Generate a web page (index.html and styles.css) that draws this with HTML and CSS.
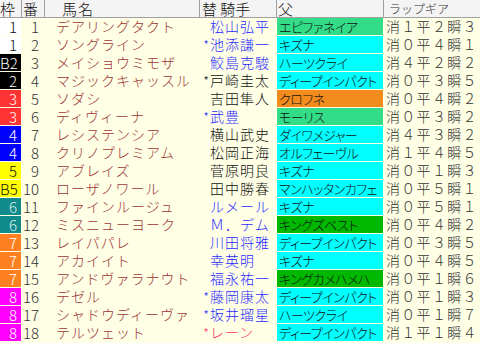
FILE: index.html
```html
<!DOCTYPE html>
<html lang="ja">
<head>
<meta charset="utf-8">
<link rel="stylesheet" href="styles.css">
</head>
<body>
<table class="tbl">
<colgroup>
<col class="c-waku"><col class="c-ban"><col class="c-name"><col class="c-kae"><col class="c-jockey"><col class="c-sire"><col class="c-gear">
</colgroup>
<thead>
<tr>
<th class="h-waku">枠</th><th class="h-ban">番</th><th class="h-name">馬名</th><th class="h-jockey" colspan="2">替 騎手</th><th class="h-sire">父</th><th class="h-gear">ラップギア</th>
</tr>
</thead>
<tbody>
<tr><td class="waku w1">1</td><td class="ban">1</td><td class="name">デアリングタクト</td><td class="kae"></td><td class="jockey blue">松山弘平</td><td class="sire s-green">エピファネイア</td><td class="gear">消１平２瞬３</td></tr>
<tr><td class="waku w1">1</td><td class="ban">2</td><td class="name">ソングライン</td><td class="kae blue">*</td><td class="jockey blue">池添謙一</td><td class="sire s-cyan">キズナ</td><td class="gear">消０平４瞬１</td></tr>
<tr><td class="waku w2">B2</td><td class="ban">3</td><td class="name">メイショウミモザ</td><td class="kae"></td><td class="jockey blue">鮫島克駿</td><td class="sire s-cyan">ハーツクライ</td><td class="gear">消４平２瞬２</td></tr>
<tr><td class="waku w2">2</td><td class="ban">4</td><td class="name">マジックキャッスル</td><td class="kae">*</td><td class="jockey">戸崎圭太</td><td class="sire s-cyan">ディープインパクト</td><td class="gear">消０平３瞬５</td></tr>
<tr><td class="waku w3">3</td><td class="ban">5</td><td class="name">ソダシ</td><td class="kae"></td><td class="jockey">吉田隼人</td><td class="sire s-orange">クロフネ</td><td class="gear">消０平４瞬２</td></tr>
<tr><td class="waku w3">3</td><td class="ban">6</td><td class="name">ディヴィーナ</td><td class="kae blue">*</td><td class="jockey blue">武豊</td><td class="sire s-green">モーリス</td><td class="gear">消０平３瞬２</td></tr>
<tr><td class="waku w4">4</td><td class="ban">7</td><td class="name">レシステンシア</td><td class="kae"></td><td class="jockey">横山武史</td><td class="sire s-cyan">ダイワメジャー</td><td class="gear">消４平３瞬２</td></tr>
<tr><td class="waku w4">4</td><td class="ban">8</td><td class="name">クリノプレミアム</td><td class="kae"></td><td class="jockey">松岡正海</td><td class="sire s-cyan">オルフェーヴル</td><td class="gear">消１平４瞬５</td></tr>
<tr><td class="waku w5">5</td><td class="ban">9</td><td class="name">アブレイズ</td><td class="kae"></td><td class="jockey">菅原明良</td><td class="sire s-cyan">キズナ</td><td class="gear">消０平１瞬３</td></tr>
<tr><td class="waku w5">B5</td><td class="ban">10</td><td class="name">ローザノワール</td><td class="kae"></td><td class="jockey">田中勝春</td><td class="sire s-cyan">マンハッタンカフェ</td><td class="gear">消０平５瞬１</td></tr>
<tr><td class="waku w6">6</td><td class="ban">11</td><td class="name">ファインルージュ</td><td class="kae"></td><td class="jockey blue">ルメール</td><td class="sire s-cyan">キズナ</td><td class="gear">消０平５瞬１</td></tr>
<tr><td class="waku w6">6</td><td class="ban">12</td><td class="name">ミスニューヨーク</td><td class="kae"></td><td class="jockey blue">Ｍ．デム</td><td class="sire s-dgreen">キングズベスト</td><td class="gear">消０平４瞬２</td></tr>
<tr><td class="waku w7">7</td><td class="ban">13</td><td class="name">レイパパレ</td><td class="kae"></td><td class="jockey blue">川田将雅</td><td class="sire s-cyan">ディープインパクト</td><td class="gear">消０平３瞬５</td></tr>
<tr><td class="waku w7">7</td><td class="ban">14</td><td class="name">アカイイト</td><td class="kae"></td><td class="jockey blue">幸英明</td><td class="sire s-cyan">キズナ</td><td class="gear">消０平４瞬５</td></tr>
<tr><td class="waku w7">7</td><td class="ban">15</td><td class="name">アンドヴァラナウト</td><td class="kae"></td><td class="jockey blue">福永祐一</td><td class="sire s-dgreen">キングカメハメハ</td><td class="gear">消０平１瞬６</td></tr>
<tr><td class="waku w8">8</td><td class="ban">16</td><td class="name">デゼル</td><td class="kae blue">*</td><td class="jockey blue">藤岡康太</td><td class="sire s-cyan">ディープインパクト</td><td class="gear">消０平１瞬３</td></tr>
<tr><td class="waku w8">8</td><td class="ban">17</td><td class="name">シャドウディーヴァ</td><td class="kae blue">*</td><td class="jockey blue">坂井瑠星</td><td class="sire s-cyan">ハーツクライ</td><td class="gear">消０平１瞬７</td></tr>
<tr><td class="waku w8">8</td><td class="ban">18</td><td class="name">テルツェット</td><td class="kae pink">*</td><td class="jockey pink">レーン</td><td class="sire s-cyan">ディープインパクト</td><td class="gear">消１平１瞬４</td></tr>
</tbody>
</table>
</body>
</html>
```

FILE: styles.css
```css
html, body {
  margin: 0;
  padding: 0;
  background: #ffffe6;
}
body {
  width: 480px;
  height: 343px;
  overflow: hidden;
  font-family: "Noto Sans CJK JP", "Noto Sans", sans-serif;
  font-weight: 300;
}
.tbl {
  width: 480px;
  table-layout: fixed;
  border-collapse: separate;
  border-spacing: 0;
}
.c-waku { width: 22px; }
.c-ban { width: 23px; }
.c-name { width: 155px; }
.c-kae { width: 10px; }
.c-jockey { width: 67px; }
.c-sire { width: 107px; }
.c-gear { width: 96px; }

th {
  height: 17px;
  padding: 0;
  background: #f4f4f4;
  border-bottom: 1px solid #a0a0a0;
  border-right: 1px solid #a0a0a0;
  font-weight: 300;
  font-size: 15px;
  line-height: 17px;
  color: #111;
  text-align: left;
  white-space: nowrap;
}
th.h-gear { border-right: none; }
.h-waku { padding-left: 0; }
.h-ban { padding-left: 1px; }
.h-name { padding-left: 17px; letter-spacing: 1px; }
.h-jockey { padding-left: 2px; }
.h-sire { padding-left: 1px; }
.h-gear { padding-left: 5px; font-size: 12px; color: #333; }

td {
  height: 17px;
  padding: 0;
  border-bottom: 1px solid #ffffe6;
  line-height: 17px;
  font-size: 14px;
  white-space: nowrap;
}
.waku {
  border-right: 1px solid #ffffe6;
  text-align: right;
  padding-right: 4px;
  font-size: 15px;
  color: #fff;
}
.w1 { background: #ffffff; color: #111; }
.w2 { background: #000000; }
.w3 { background: #ff3333; }
.w4 { background: #0000ff; }
.w5 { background: #ffff00; color: #111; }
.w6 { background: #108a8a; color: #d8eeee; }
.w7 { background: #ff8020; }
.w8 { background: #ff00ff; }

.ban {
  text-align: right;
  padding-right: 6px;
  font-size: 15px;
  color: #333;
}
.name {
  padding-left: 11px;
  color: #9c3434;
  letter-spacing: 1px;
}
.kae {
  text-align: right;
  padding-right: 1px;
  font-size: 13px;
  color: #111;
}
.jockey {
  color: #111;
  letter-spacing: 1px;
}
.blue { color: #2a2aff; }
.pink { color: #ff3366; }
.sire {
  border-right: 1px solid #ffffe6;
  padding-left: 2px;
  font-size: 13px;
  letter-spacing: -0.5px;
  color: #111;
  font-feature-settings: "palt";
}
.s-cyan { background: #00ffff; }
.s-green { background: #33dd88; }
.s-orange { background: #f28c1c; }
.s-dgreen { background: #00b800; }
.gear {
  padding-left: 2px;
  color: #333;
  letter-spacing: 1.3px;
}
```
